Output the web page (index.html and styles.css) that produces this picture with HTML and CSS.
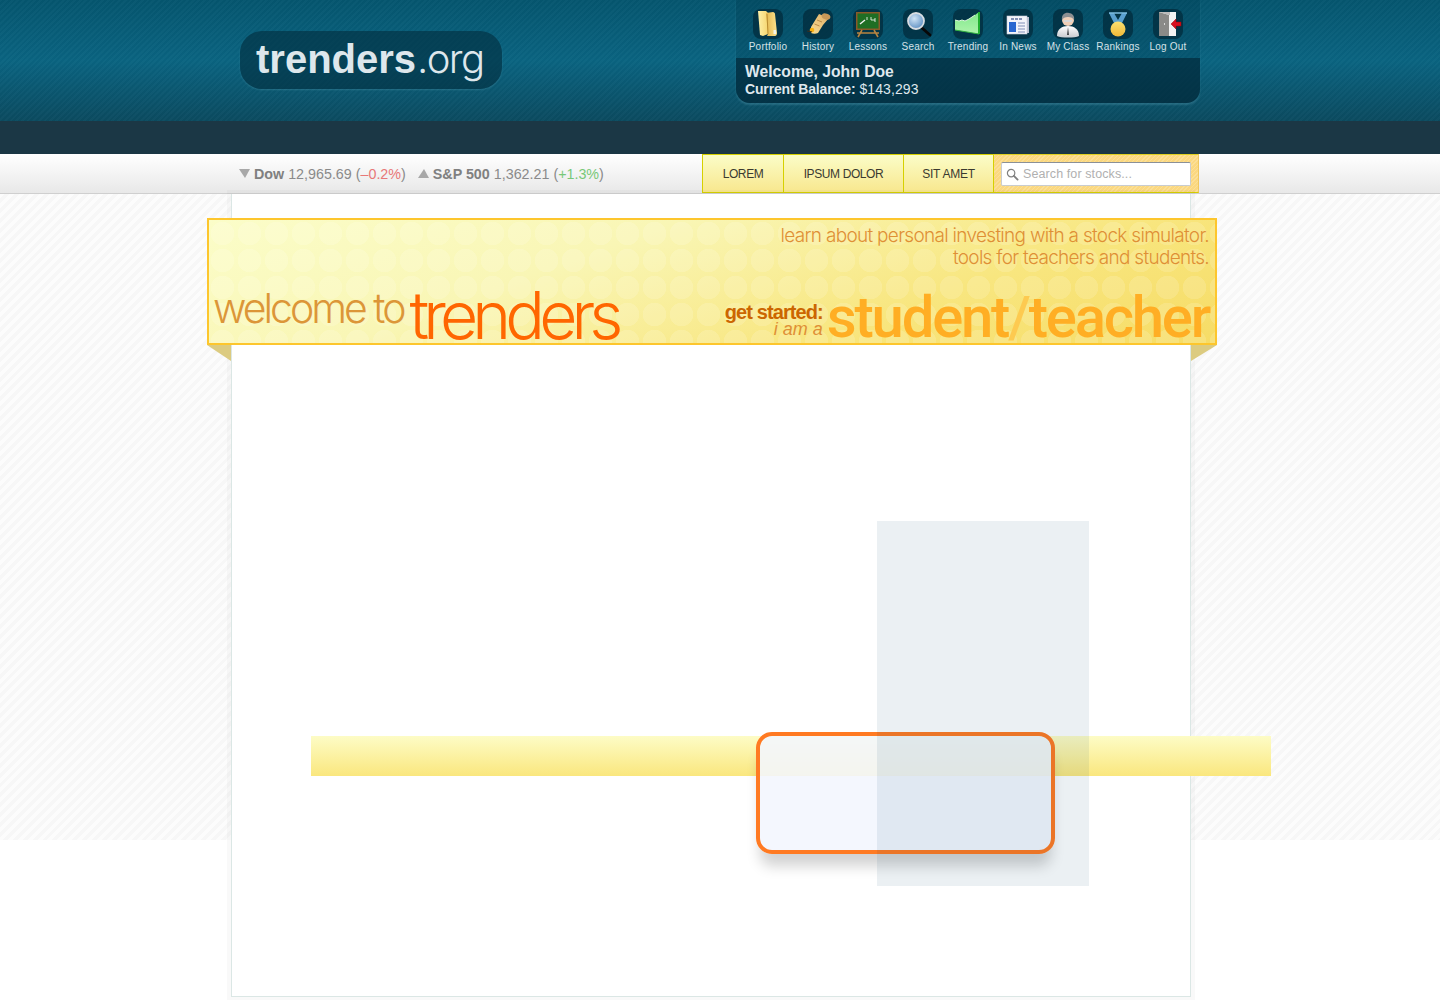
FILE: index.html
```html
<!DOCTYPE html>
<html lang="en">
<head>
<meta charset="utf-8">
<title>trenders.org</title>
<link rel="stylesheet" href="styles.css">
</head>
<body>
<header class="masthead">
  <div class="masthead-inner">
    <a class="logo"><span class="logo-bold">trenders</span><span class="logo-light">.org</span></a>
    <div class="account">
      <nav class="apps">
        <a class="app"><span class="tile"><svg viewBox="0 0 30 30" width="30" height="30"><defs><linearGradient id="fa" x1="0" y1="0" x2="1" y2="0"><stop offset="0" stop-color="#fdf0a8"/><stop offset="1" stop-color="#f6d670"/></linearGradient><linearGradient id="fb" x1="0" y1="0" x2="1" y2="0"><stop offset="0" stop-color="#e4b850"/><stop offset="1" stop-color="#fbe28c"/></linearGradient></defs><path d="M5 2h8l2 2v21l-5 2-3-1z" fill="url(#fa)"/><path d="M13 4l7-1c1 0 2 1 2 2l2 19c0 2-1 3-2 3h-8l1-2z" fill="url(#fb)"/><path d="M14 5l1 20" stroke="#b98d30" stroke-width="1" fill="none"/><rect x="20.500" y="21" width="2.500" height="4" fill="#f4f6ea"/></svg></span><span class="app-label">Portfolio</span></a>
        <a class="app"><span class="tile"><svg viewBox="0 0 30 30" width="30" height="30"><defs><linearGradient id="sc" x1="0" y1="1" x2="1" y2="0"><stop offset="0" stop-color="#f8dc90"/><stop offset="1" stop-color="#e0ae68"/></linearGradient></defs><path d="M8 18L16 5l10 4-6 7-5 8c-2 1-5 1-7 0z" fill="url(#sc)"/><ellipse cx="23" cy="7.500" rx="4.500" ry="3" fill="#c89858" transform="rotate(20 23 7.500)"/><path d="M14 11l5 2M11.500 15l5 2" stroke="#b98a48" fill="none"/><circle cx="9" cy="21" r="2.300" fill="#f8b010"/><path d="M4 22l5 1" stroke="#3a3020" stroke-width="1.200"/></svg></span><span class="app-label">History</span></a>
        <a class="app"><span class="tile"><svg viewBox="0 0 30 30" width="30" height="30"><rect x="3" y="3" width="24" height="18" fill="#8a5a28"/><rect x="4.500" y="4.500" width="21" height="15" fill="#1f6e24"/><path d="M7 15l5-4" stroke="#f2f2f2" stroke-width="1.500"/><path d="M14 8v3M18 8v3h2M23 10h-2v2h2" stroke="#e8f0e8" fill="none" stroke-width=".9"/><path d="M9 21l-4 7M21 21l4 7M4 24h22" stroke="#b88440" stroke-width="1.600" fill="none"/></svg></span><span class="app-label">Lessons</span></a>
        <a class="app"><span class="tile"><svg viewBox="0 0 30 30" width="30" height="30"><defs><radialGradient id="gl" cx=".4" cy=".35" r=".7"><stop offset="0" stop-color="#cfe4f6"/><stop offset="1" stop-color="#5a8cc0"/></radialGradient></defs><path d="M19 19l8 7" stroke="#080808" stroke-width="2.800" stroke-linecap="round"/><circle cx="13" cy="12" r="8" fill="url(#gl)" stroke="#d8dde2" stroke-width="1.800"/></svg></span><span class="app-label">Search</span></a>
        <a class="app"><span class="tile"><svg viewBox="0 0 30 30" width="30" height="30"><defs><linearGradient id="gr" x1="0" y1="0" x2="0" y2="1"><stop offset="0" stop-color="#7fe88a"/><stop offset="1" stop-color="#aef3ac"/></linearGradient></defs><path d="M2 11l4 1 3-1 3 1 4-2 6-4 4-3v22L2 21z" fill="url(#gr)"/><path d="M2 11l4 1 3-1 3 1 4-2 6-4" stroke="#dcf8dc" fill="none"/><path d="M26 3v22" stroke="#20b030" stroke-width="2"/><path d="M2 21l24 4" stroke="#30b040"/></svg></span><span class="app-label">Trending</span></a>
        <a class="app"><span class="tile"><svg viewBox="0 0 30 30" width="30" height="30"><rect x="23" y="8" width="3" height="16" fill="#b8bed0"/><rect x="4" y="7" width="20" height="18" fill="#f4f5fa" stroke="#c8cddc" stroke-width=".6"/><path d="M8 10h12" stroke="#6070a0" stroke-width="1.500" stroke-dasharray="3 1"/><rect x="6" y="13" width="7" height="10" fill="#2a68d0"/><path d="M15 14h7M15 17h7M15 20h7M15 23h7" stroke="#8090b8" stroke-width="1.200"/></svg></span><span class="app-label">In News</span></a>
        <a class="app"><span class="tile"><svg viewBox="0 0 30 30" width="30" height="30"><defs><linearGradient id="su" x1="0" y1="0" x2="0" y2="1"><stop offset="0" stop-color="#fff"/><stop offset="1" stop-color="#c8cbd0"/></linearGradient></defs><path d="M4 27c0-7 5-10 11-10s11 3 11 10c-4 2-18 2-22 0z" fill="url(#su)"/><circle cx="15" cy="11" r="6" fill="#f0d0b8"/><path d="M9 11c-1-6 4-8 7-7 3 0 6 3 5 7-1-2-3-3-6-3s-5 1-6 3z" fill="#8c8f92"/><path d="M11 12h8" stroke="#d8d8d8" stroke-width="2"/><path d="M15 18l-1 8h2z" fill="#404448"/></svg></span><span class="app-label">My Class</span></a>
        <a class="app"><span class="tile"><svg viewBox="0 0 30 30" width="30" height="30"><defs><linearGradient id="go" x1="0" y1="0" x2="0" y2="1"><stop offset="0" stop-color="#fbe070"/><stop offset="1" stop-color="#f0b838"/></linearGradient></defs><path d="M6 4h5l4 7 4-7h5l-6 12h-6z" fill="#5aa0d0"/><path d="M6 4h18" stroke="#7cbce0" stroke-width="1.500"/><circle cx="15" cy="20" r="7.500" fill="url(#go)"/></svg></span><span class="app-label">Rankings</span></a>
        <a class="app"><span class="tile"><svg viewBox="0 0 30 30" width="30" height="30"><rect x="6" y="3" width="17" height="24" fill="#f2f2f2"/><path d="M6 3l10 3v21H6z" fill="#8a8a88"/><path d="M6 3h11v3H16z" fill="#bbb"/><path d="M11 14l1 1-1 1" stroke="#d8d8d8" fill="none"/><path d="M18 15l5-5v3h5v4h-5v3z" fill="#d81020" stroke="#900" stroke-width=".5"/></svg></span><span class="app-label">Log Out</span></a>
      </nav>
      <div class="welcome">
        <div class="welcome-name">Welcome, John Doe</div>
        <div class="welcome-balance"><b>Current Balance:</b> $143,293</div>
      </div>
    </div>
  </div>
</header>
<div class="darkbar"></div>
<div class="subnav">
  <div class="subnav-inner">
    <div class="ticker">
      <span class="tri tri-down"></span>
      <span class="tick"><b>Dow</b> 12,965.69 (<span class="neg">–0.2%</span>)</span>
      <span class="tri tri-up"></span>
      <span class="tick"><b>S&amp;P 500</b> 1,362.21 (<span class="pos">+1.3%</span>)</span>
    </div>
    <div class="menu">
      <a class="menu-item item-lorem">LOREM</a>
      <a class="menu-item item-ipsum">IPSUM DOLOR</a>
      <a class="menu-item item-sit">SIT AMET</a>
      <div class="menu-search">
        <label class="searchbox">
          <svg viewBox="0 0 14 14" width="13" height="13"><circle cx="5.500" cy="5.500" r="4" fill="none" stroke="#808080" stroke-width="1.300"/><path d="M8.500 8.500l4 4" stroke="#808080" stroke-width="2" stroke-linecap="round"/></svg>
          <span class="placeholder">Search for stocks...</span>
        </label>
      </div>
    </div>
  </div>
</div>
<main class="stage">
  <section class="card">
    <div class="banner">
      <span class="fold fold-left"></span>
      <span class="fold fold-right"></span>
      <p class="tagline">learn about personal investing with a stock simulator.<br>tools for teachers and students.</p>
      <div class="banner-row">
        <h1 class="hello"><span class="hello-to">welcome to</span><span class="hello-name">trenders</span></h1>
        <div class="start">
          <div class="start-copy"><div class="start-lead">get started:</div><div class="start-sub">i am a</div></div>
          <div class="roles">student<span class="roles-slash">/</span>teacher</div>
        </div>
      </div>
    </div>
    <div class="hl-bar"></div>
    <div class="hl-box"></div>
    <div class="hl-column"></div>
  </section>
</main>
</body>
</html>
```
FILE: styles.css
```css
* { box-sizing: border-box; }
html, body { margin: 0; padding: 0; }
body {
  width: 1440px;
  height: 1000px;
  overflow: hidden;
  background: #fff;
  font-family: "Liberation Sans", Arial, sans-serif;
}
a { color: inherit; text-decoration: none; }

.masthead {
  height: 121px;
  background:
    repeating-linear-gradient(135deg, rgba(255,255,255,.02) 0 2px, rgba(0,0,0,.02) 2px 4px),
    linear-gradient(180deg, #05566f 0%, #0a6481 50%, #0b4b60 100%);
}
.masthead-inner {
  width: 960px;
  margin-left: 240px;
  display: flex;
  justify-content: space-between;
  align-items: flex-start;
}
.logo {
  margin-top: 31px;
  width: 262px;
  height: 58px;
  border-radius: 22px;
  background: rgba(3, 50, 68, .68);
  box-shadow: 0 1px 2px rgba(130, 200, 220, .22);
  padding-left: 16px;
  line-height: 55px;
  color: #dde7ec;
  font-size: 40px;
  white-space: nowrap;
}
.logo-bold { font-weight: 700; }
.logo-light { font-family: Inter, "Liberation Sans", sans-serif; font-weight: 300; font-size: 40px; letter-spacing: -1.600px; margin-left: 1px; }

.account {
  width: 464px;
  height: 103px;
  border-radius: 0 0 14px 14px;
  background: rgba(0, 50, 70, .25);
  box-shadow: 0 2px 2px rgba(130, 200, 220, .22);
  overflow: hidden;
  display: flex;
  flex-direction: column;
}
.apps {
  height: 58px;
  padding: 9px 7px 0;
  display: flex;
}
.app {
  width: 50px;
  display: flex;
  flex-direction: column;
  align-items: center;
  color: #d5e2e8;
}
.tile {
  width: 30px;
  height: 30px;
  border-radius: 8px;
  background: rgba(2, 42, 58, .72);
  display: block;
}
.tile svg { display: block; }
.app-label {
  margin-top: 2px;
  font-size: 10px;
  line-height: 12px;
  white-space: nowrap;
  letter-spacing: .2px;
}
.welcome {
  flex: 1;
  background: rgba(2, 40, 56, .66);
  padding: 5px 9px 0;
  color: #dfe8ee;
}
.welcome-name { font-size: 15.700px; font-weight: 700; line-height: 17px; }
.welcome-balance { font-size: 14px; line-height: 18px; letter-spacing: .1px; }
.welcome-balance b { letter-spacing: -.15px; }

.darkbar { height: 33px; background: #1b3745; }

.subnav {
  height: 40px;
  background: linear-gradient(180deg, #fff 0%, #e8e8e8 100%);
  border-bottom: 1px solid #cfcfcf;
}
.subnav-inner {
  width: 960px;
  margin-left: 239px;
  display: flex;
  justify-content: space-between;
  height: 39px;
}
.ticker {
  display: flex;
  align-items: center;
  font-size: 14.300px;
  color: #8a8a8a;
  white-space: nowrap;
}
.tick { margin-left: 4px; margin-right: 12px; }
.tick b { color: #808080; }
.neg { color: #e87878; }
.pos { color: #78c878; }
.tri { width: 0; height: 0; border-left: 6px solid transparent; border-right: 5px solid transparent; }
.tri-down { border-top: 9px solid #a8a8a8; }
.tri-up { border-bottom: 9px solid #a8a8a8; }
.menu { display: flex; height: 39px; }
.menu-item {
  display: flex;
  align-items: center;
  justify-content: center;
  height: 39px;
  border: 1px solid #d6d000;
  border-right: 0;
  background: linear-gradient(180deg, #fbfdc8 0%, #f8e78e 100%);
  font-size: 12px;
  letter-spacing: -.4px;
  color: #3a3a30;
}
.item-lorem { width: 81px; }
.item-ipsum { width: 120px; }
.item-sit { width: 90px; letter-spacing: -.25px; }
.menu-search {
  width: 206px;
  height: 39px;
  border: 1px solid #d6d000;
  border-top-color: #e0d020;
  border-right-color: #f0c860;
  padding: 7px 7px 0;
  background:
    repeating-linear-gradient(135deg, rgba(255,255,255,.18) 0 1px, rgba(255,255,255,0) 1px 3px),
    #fbd880;
}
.searchbox {
  display: flex;
  align-items: center;
  gap: 4px;
  width: 190px;
  height: 24px;
  background: #fff;
  border: 1px solid #c8ccd0;
  border-top-color: #8a9098;
  border-radius: 2px;
  padding-left: 4px;
}
.placeholder { font-size: 12.500px; color: #b0b0b0; letter-spacing: .1px; }

.stage {
  height: 806px;
  padding-left: 231px;
  background:
    repeating-linear-gradient(135deg, #fcfcfc 0 3.500px, #f7f7f7 3.500px 7px) no-repeat 0 0 / 100% 646px;
}
.card {
  position: relative;
  width: 960px;
  height: 803px;
  background: #fff;
  border: 1px solid #dbe7e5;
  border-top: 0;
  box-shadow: 0 0 0 4px rgba(0, 0, 0, .025);
  padding-top: 24px;
}

.banner {
  position: relative;
  z-index: 1;
  width: 1010px;
  height: 127px;
  margin-left: -25px;
  border: 2px solid #fdc62d;
  padding: 5px 6px 0;
  background:
    radial-gradient(circle at 13.500px 13.500px, rgba(255,255,255,.14) 0 11.500px, transparent 12px) 0 0 / 27px 27px,
    linear-gradient(160deg, #fbfdc9 0%, #f9f6b5 35%, #f8e67f 70%, #f6dc66 100%);
}
.fold { position: absolute; top: 125px; width: 0; height: 0; border-top: 16px solid #dccb80; }
.fold-left { left: -2px; border-left: 24px solid transparent; }
.fold-right { right: -2px; border-right: 26px solid transparent; }
.tagline {
  margin: 0;
  text-align: right;
  font-family: Inter, "Liberation Sans", sans-serif;
  font-weight: 300;
  font-size: 19px;
  line-height: 22px;
  letter-spacing: -.7px;
  color: #df8f35;
}
.banner-row {
  display: flex;
  justify-content: space-between;
  align-items: flex-end;
  height: 71px;
  margin-top: 6px;
}
.hello {
  margin: 0 0 0 -2px;
  font-family: Inter, "Liberation Sans", sans-serif;
  font-weight: 300;
  white-space: nowrap;
  display: flex;
  align-items: flex-end;
}
.hello-to { font-size: 41px; line-height: 75px; letter-spacing: -3px; color: #dc9638; }
.hello-name { font-size: 66px; line-height: 62px; letter-spacing: -5.900px; color: #ff6600; margin-left: 6px; }
.start { display: flex; align-items: flex-end; }
.start-copy { text-align: right; margin-right: 4px; margin-bottom: 8px; }
.start-lead { font-size: 20px; font-weight: 700; line-height: 17px; letter-spacing: -.9px; color: #cc6600; }
.start-sub { font-size: 18px; font-style: italic; line-height: 17px; color: #df8f35; }
.roles {
  font-family: Roboto, "Liberation Sans", sans-serif;
  font-size: 58px;
  font-weight: 500;
  line-height: 58px;
  letter-spacing: -2.200px;
  color: #ffae24;
  white-space: nowrap;
}
.roles-slash { color: #fdca50; }

.hl-bar {
  position: absolute;
  left: 79px;
  top: 542px;
  width: 960px;
  height: 40px;
  background: linear-gradient(180deg, #fdfcc6 0%, #fae77e 100%);
}
.hl-box {
  position: absolute;
  left: 524px;
  top: 538px;
  width: 299px;
  height: 122px;
  border: 4px solid #ff7a22;
  border-radius: 16px;
  background: rgba(243, 246, 254, .88);
  box-shadow: 0 16px 14px -4px rgba(0, 0, 0, .18);
}
.hl-column {
  position: absolute;
  left: 645px;
  top: 327px;
  width: 212px;
  height: 365px;
  background: rgba(0, 60, 100, .08);
}
```
